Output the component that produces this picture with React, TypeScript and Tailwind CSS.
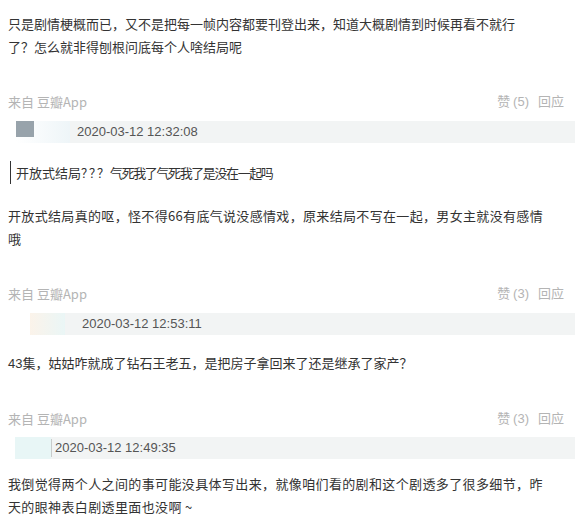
import React from "react";

const cjk = { fontFamily: '"Noto Sans CJK SC", "Liberation Sans", sans-serif' };
const latin = { fontFamily: '"Liberation Sans", "Noto Sans CJK SC", sans-serif' };

function Meta({ likes }: { likes: number }) {
  return (
    <div className="flex items-center justify-between leading-[20px] text-[13px] text-[#b4b4b4]" style={cjk}>
      <span>来自 豆瓣App</span>
      <span className="pr-[7px]">
        赞 <span style={latin}>({likes})</span>
        <span className="ml-[9px]">回应</span>
      </span>
    </div>
  );
}

export default function App() {
  return (
    <div className="w-[579px] h-[516px] overflow-hidden bg-white text-[#333] px-2" style={cjk}>
      <p className="pt-[12px] text-[13px] leading-[23px]">
        只是剧情梗概而已，又不是把每一帧内容都要刊登出来，知道大概剧情到时候再看不就行
        <br />
        了？怎么就非得刨根问底每个人啥结局呢
      </p>

      <div className="mt-[33px]">
        <Meta likes={5} />
      </div>

      <div className="mt-[9px] flex h-[22px] items-stretch -mr-1">
        <div className="ml-[8px] flex w-[54px] items-start bg-gradient-to-r from-white to-[#eef5f8]">
          <div className="h-[16px] w-[18px] bg-[#98a3ab]" />
        </div>
        <div className="flex flex-1 items-center bg-[#f2f4f4] pl-[7px] text-[13px] text-[#555]" style={latin}>
          2020-03-12 12:32:08
        </div>
      </div>

      <div className="mt-[18px] ml-[2px] border-l border-[#333] pl-[5px] text-[13px] leading-[23px]">
        开放式结局<span className="tracking-[-4px] text-[12px]">？？？</span>
        <span className="ml-[5px] tracking-[-1.4px]">气死我了气死我了是没在一起吗</span>
      </div>

      <p className="mt-[20px] text-[13px] leading-[23px] tracking-[0.33px]">
        开放式结局真的呕，怪不得66有底气说没感情戏，原来结局不写在一起，男女主就没有感情
        <br />
        哦
      </p>

      <div className="mt-[33px]">
        <Meta likes={3} />
      </div>

      <div className="mt-[9px] flex h-[22px] items-stretch -mr-1">
        <div className="ml-[22px] flex w-[35px] bg-gradient-to-r from-[#fbf3ea] to-[#eaf6f6]" />
        <div className="flex flex-1 items-center bg-[#f2f4f4] pl-[17px] text-[13px] text-[#555]" style={latin}>
          2020-03-12 12:53:11
        </div>
      </div>

      <p className="mt-[16px] text-[13px] leading-[23px]">
        <span style={latin}>43</span>集，姑姑咋就成了钻石王老五，是把房子拿回来了还是继承了家产？
      </p>

      <div className="mt-[33px]">
        <Meta likes={3} />
      </div>

      <div className="mt-[8px] flex h-[22px] items-stretch -mr-1 bg-[#f2f4f4] ml-[7px]">
        <div className="w-[36px] bg-[#e8f6f6]" />
        <div className="my-[2px] w-px bg-[#c8cccc]" />
        <div className="flex flex-1 items-center pl-[3px] text-[13px] text-[#555]" style={latin}>
          2020-03-12 12:49:35
        </div>
      </div>

      <p className="mt-[13px] text-[13px] leading-[23px] tracking-[0.37px]">
        我倒觉得两个人之间的事可能没具体写出来，就像咱们看的剧和这个剧透多了很多细节，昨
        <br />
        天的眼神表白剧透里面也没啊 ~
      </p>
    </div>
  );
}
